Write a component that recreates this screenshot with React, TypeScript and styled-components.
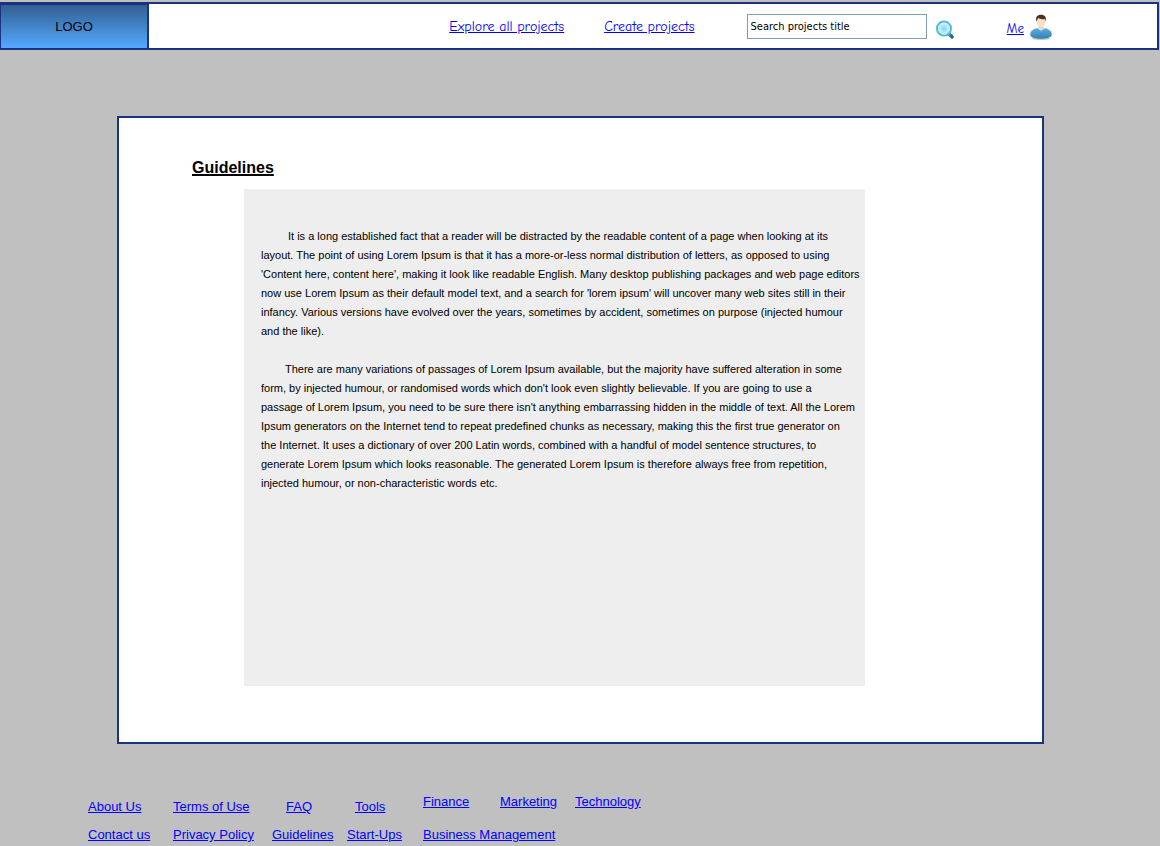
import React from 'react';
import styled, { createGlobalStyle } from 'styled-components';

const GlobalStyle = createGlobalStyle`
  * { box-sizing: border-box; }
  body {
    margin: 0;
    background: #c0c0c0;
    color: #000;
    font: 13px/16px "Liberation Sans", Arial, sans-serif;
  }
  a { color: #0000ff; text-decoration: underline; }
`;

const Page = styled.div`
  padding-top: 2px;
`;

const Header = styled.header`
  display: flex;
  align-items: stretch;
  height: 48px;
  margin-right: 1px;
  background: #fff;
  border: 2px solid #1b3281;
  border-left-width: 1px;
`;

const Logo = styled.div`
  display: flex;
  flex: none;
  align-items: center;
  justify-content: center;
  width: 148px;
  border-top: 1px solid #1b3281;
  border-right: 2px solid #1b3281;
  background: linear-gradient(#315f92, #53a9ff);
`;

const Nav = styled.nav`
  display: flex;
  flex: 1;
  align-items: center;
  justify-content: flex-end;
  gap: 40px;
  padding-top: 2px;
  font: 14px/16px "Comic Sans MS", "Comic Neue", "Open Sans", sans-serif;
  white-space: nowrap;
`;

const SearchForm = styled.form`
  display: flex;
  align-items: center;
  gap: 8px;
  margin: 0 52px;
`;

const SearchInput = styled.input`
  width: 180px;
  height: 25px;
  padding: 0 3px;
  color: #000;
  background: #fff;
  border: 1px solid #7f9db9;
  border-radius: 0;
  font: 11px Tahoma, "DejaVu Sans Condensed", sans-serif;
  &::placeholder { color: #000; opacity: 1; }
`;

const SearchButton = styled.button`
  width: 20px;
  height: 20px;
  margin-top: 8px;
  padding: 0;
  background: none;
  border: 0;
  cursor: pointer;
  svg { display: block; }
`;

const Profile = styled.a`
  display: flex;
  align-items: center;
  gap: 6px;
  margin-right: 105px;
  padding-top: 2px;
  font: 13px/16px "Comic Sans MS", "Comic Neue", "Open Sans", sans-serif;
`;

const ProfileName = styled.span`
  padding-top: 4px;
`;

const Panel = styled.main`
  margin: 66px 116px 0 117px;
  padding: 40px 177px 56px 73px;
  background: #fff;
  border: 2px solid #1b3281;
`;

const Title = styled.h1`
  margin: 0;
  font-size: 16px;
  line-height: 20px;
  text-decoration: underline 2px;
`;

const Article = styled.article`
  min-height: 497px;
  margin: 11px 0 0 52px;
  padding: 38px 17px;
  background: #eee;
  font-size: 11px;
  line-height: 19px;
  white-space: nowrap;
`;

const Paragraph = styled.p<{ $indent: number }>`
  margin: 0 0 19px;
  text-indent: ${(p) => p.$indent}px;
`;

const Footer = styled.footer`
  display: flex;
  margin-top: 50px;
  padding: 0 88px;
  white-space: nowrap;
`;

const SiteLinks = styled.nav`
  display: grid;
  grid-template-columns: 85px 99px 75px 76px;
  row-gap: 12px;
  padding-top: 5px;
`;

const CategoryLinks = styled.nav`
  display: grid;
  grid-template-columns: 77px 75px auto;
  row-gap: 17px;
`;

const FooterLink = styled.a<{ $indent?: number; $wide?: boolean }>`
  justify-self: start;
  margin-left: ${(p) => p.$indent ?? 0}px;
  grid-column: ${(p) => (p.$wide ? '1 / -1' : 'auto')};
`;

const MagnifierIcon = () => (
  <svg width="20" height="20" viewBox="0 0 20 20" aria-hidden="true">
    <defs>
      <radialGradient id="lens">
        <stop offset="0" stopColor="#8fd4f2" />
        <stop offset="1" stopColor="#e2f6fd" />
      </radialGradient>
    </defs>
    <path d="M13.5 13.5l3.5 3.5" stroke="#2e93ae" strokeWidth="3.6" strokeLinecap="round" />
    <path d="M16.6 15.6l.8 1.4" stroke="#27647c" strokeWidth="2.4" strokeLinecap="round" />
    <circle cx="9" cy="8.6" r="7" fill="url(#lens)" stroke="#4dbbd3" strokeWidth="2" />
    <circle cx="9" cy="8.6" r="5.6" fill="none" stroke="#c6edf8" strokeWidth="1" />
  </svg>
);

const UserIcon = () => (
  <svg width="22" height="26" viewBox="0 0 22 26" aria-hidden="true">
    <defs>
      <linearGradient id="shirt" x1="0" y1="0" x2="0" y2="1">
        <stop offset="0" stopColor="#5fade0" />
        <stop offset="1" stopColor="#2f83b0" />
      </linearGradient>
    </defs>
    <ellipse cx="11" cy="24.6" rx="9.5" ry="1.3" fill="#c4c4c4" />
    <path d="M.2 20.4C.2 17 3.5 14.6 8 14h6c4.500.6 7.800 3 7.800 6.400 0 2.900-5 4.400-10.800 4.400S.2 23.300.2 20.400z" fill="url(#shirt)" />
    <path d="M7 14.200L11 16.800l4-2.600-1.600-1.200H8.600z" fill="#cbe8f7" />
    <path d="M8.600 11h4.800v3L11 15.400 8.600 14z" fill="#efd3b8" />
    <path d="M6.600 5.500c0-3 8.800-3 8.800 0 0 4-1.400 7.500-4.400 7.500S6.600 9.500 6.600 5.500z" fill="#f8dfc8" />
    <path d="M6.400 7.500C5.200 2.800 7.200.7 11 .7s5.800 2.100 4.600 6.800l-.8-2.600c-2.400.6-5.200.2-6.600-.9z" fill="#4d3023" />
  </svg>
);

export default function App() {
  return (
    <Page>
      <GlobalStyle />
      <Header>
        <Logo>LOGO</Logo>
        <Nav aria-label="Projects">
          <a href="#explore">Explore all projects</a>
          <a href="#create">Create projects</a>
        </Nav>
        <SearchForm role="search" onSubmit={(e) => e.preventDefault()}>
          <SearchInput type="text" aria-label="Search projects title" placeholder="Search projects title" />
          <SearchButton type="submit" aria-label="Search">
            <MagnifierIcon />
          </SearchButton>
        </SearchForm>
        <Profile href="#me">
          <ProfileName>Me</ProfileName>
          <UserIcon />
        </Profile>
      </Header>

      <Panel>
        <Title>Guidelines</Title>
        <Article>
          <Paragraph $indent={27}>
            It is a long established fact that a reader will be distracted by the readable content of a page when looking at its<br />
            layout. The point of using Lorem Ipsum is that it has a more-or-less normal distribution of letters, as opposed to using<br />
            'Content here, content here', making it look like readable English. Many desktop publishing packages and web page editors<br />
            now use Lorem Ipsum as their default model text, and a search for 'lorem ipsum' will uncover many web sites still in their<br />
            infancy. Various versions have evolved over the years, sometimes by accident, sometimes on purpose (injected humour<br />
            and the like).
          </Paragraph>
          <Paragraph $indent={24}>
            There are many variations of passages of Lorem Ipsum available, but the majority have suffered alteration in some<br />
            form, by injected humour, or randomised words which don't look even slightly believable. If you are going to use a<br />
            passage of Lorem Ipsum, you need to be sure there isn't anything embarrassing hidden in the middle of text. All the Lorem<br />
            Ipsum generators on the Internet tend to repeat predefined chunks as necessary, making this the first true generator on<br />
            the Internet. It uses a dictionary of over 200 Latin words, combined with a handful of model sentence structures, to<br />
            generate Lorem Ipsum which looks reasonable. The generated Lorem Ipsum is therefore always free from repetition,<br />
            injected humour, or non-characteristic words etc.
          </Paragraph>
        </Article>
      </Panel>

      <Footer>
        <SiteLinks aria-label="Site">
          <FooterLink href="#about">About Us</FooterLink>
          <FooterLink href="#terms">Terms of Use</FooterLink>
          <FooterLink href="#faq" $indent={14}>FAQ</FooterLink>
          <FooterLink href="#tools" $indent={8}>Tools</FooterLink>
          <FooterLink href="#contact">Contact us</FooterLink>
          <FooterLink href="#privacy">Privacy Policy</FooterLink>
          <FooterLink href="#guidelines">Guidelines</FooterLink>
          <FooterLink href="#start-ups">Start-Ups</FooterLink>
        </SiteLinks>
        <CategoryLinks aria-label="Categories">
          <FooterLink href="#finance">Finance</FooterLink>
          <FooterLink href="#marketing">Marketing</FooterLink>
          <FooterLink href="#technology">Technology</FooterLink>
          <FooterLink href="#business" $wide>Business Management</FooterLink>
        </CategoryLinks>
      </Footer>
    </Page>
  );
}
